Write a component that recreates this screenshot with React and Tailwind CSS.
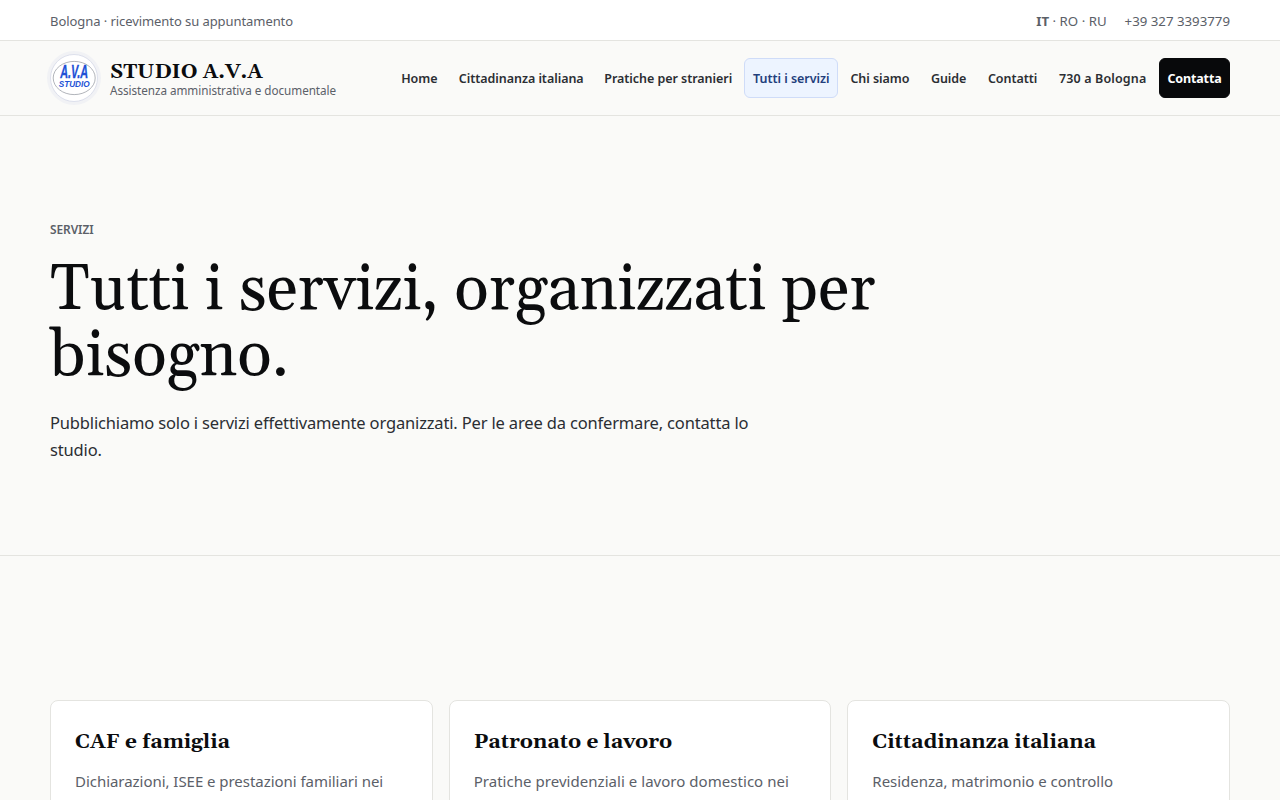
const navItems = [
  { label: 'Home', width: 'w-[55.3px]' },
  { label: 'Cittadinanza italiana', width: 'w-[142px]' },
  { label: 'Pratiche per stranieri', width: 'w-[145.7px]' },
  { label: 'Tutti i servizi', width: 'w-[94px]', active: true },
  { label: 'Chi siamo', width: 'w-[77px]' },
  { label: 'Guide', width: 'w-[54px]' },
  { label: 'Contatti', width: 'w-[67.5px]' },
  { label: '730 a Bologna', width: 'w-[106.3px]', wide: true },
  { label: 'Contatta', width: 'w-[71px]', cta: true },
];

const cards = [
  { title: 'CAF e famiglia', text: 'Dichiarazioni, ISEE e prestazioni familiari nei', tracking: 'tracking-[-0.04px]' },
  { title: 'Patronato e lavoro', text: 'Pratiche previdenziali e lavoro domestico nei', tracking: 'tracking-[0.04px]' },
  { title: 'Cittadinanza italiana', text: 'Residenza, matrimonio e controllo', tracking: 'tracking-[-0.02px]' },
];

function Logo() {
  return (
    <svg viewBox="0 0 54 54" className="-m-[3px] size-[54px] shrink-0">
      <circle cx="27" cy="27" r="27" fill="#f1f2f5" />
      <circle cx="27" cy="27" r="23.5" fill="#fff" stroke="#dde0ec" />
      <ellipse cx="27.2" cy="27" rx="21" ry="16.6" fill="#fff" stroke="#8f949c" strokeWidth="0.7" />
      <g fill="#2151d6" fontFamily="Liberation Sans, Arial, sans-serif" fontWeight="700" fontStyle="italic" textAnchor="middle">
        <text x="27.2" y="27.3" fontSize="17.5" textLength="28" lengthAdjust="spacingAndGlyphs" stroke="#2151d6" strokeWidth="0.3">A.V.A</text>
        <text x="27.2" y="36.2" fontSize="8.6" textLength="31" lengthAdjust="spacingAndGlyphs">STUDIO</text>
      </g>
    </svg>
  );
}

function NavLink({ item }) {
  const look = item.cta
    ? 'border-[#08090b] bg-[#08090b] font-bold text-white tracking-[-0.15px]'
    : item.active
      ? 'border-[#cfdcf8] bg-[#edf4ff] font-semibold text-[#233f7c] tracking-[-0.05px]'
      : 'border-transparent font-semibold text-[#2b2e33]';
  const tracking = item.cta || item.active ? '' : item.wide ? 'tracking-[0.14px]' : 'tracking-[-0.05px]';
  return (
    <a className={`flex h-10 items-center justify-center rounded-md border pt-[2px] text-[12.5px] whitespace-nowrap ${item.width} ${look} ${tracking}`}>
      {item.label}
    </a>
  );
}

export default function App() {
  return (
    <div className="h-[800px] overflow-hidden bg-[#fafaf8] font-['Noto_Sans',sans-serif] text-[#0b0c0e]">
      <div className="flex h-[41px] items-center justify-between border-b border-[#e4e4e0] bg-white px-[50px] pt-[3px] text-[13px] text-[#5b6068]">
        <span className="tracking-[-0.07px]">Bologna · ricevimento su appuntamento</span>
        <div className="flex gap-[18px]">
          <span className="text-[13.25px]"><b>IT</b> · RO · RU</span>
          <span className="text-[13.25px]">+39 327 3393779</span>
        </div>
      </div>

      <header className="flex h-[75px] items-center justify-between border-b border-[#e4e4e0] px-[50px]">
        <div className="flex items-center gap-3">
          <Logo />
          <div className="flex flex-col pt-[2px]">
            <span className="font-[Gelasio,Georgia,serif] text-[20.5px] leading-[22px] font-bold">STUDIO A.V.A</span>
            <span className="text-[11.7px] leading-[15px] tracking-[-0.04px] text-[#5b6068]">Assistenza amministrativa e documentale</span>
          </div>
        </div>
        <nav className="flex gap-[3.2px]">
          {navItems.map((item) => <NavLink key={item.label} item={item} />)}
        </nav>
      </header>

      <section className="h-[440px] border-b border-[#e4e4e0] px-[50px] pt-[103px]">
        <p className="text-[11.9px] leading-5 font-semibold tracking-[-0.05px] text-[#5b6068]">SERVIZI</p>
        <h1 className="mt-[19px] w-[860px] font-[Gelasio,Georgia,serif] text-[64px] leading-[66px]">
          Tutti i servizi, organizzati per bisogno.
        </h1>
        <p className="mt-[19px] w-[720px] text-[16.5px] leading-[27px] tracking-[-0.16px] text-[#2b2e33]">
          Pubblichiamo solo i servizi effettivamente organizzati. Per le aree da confermare, contatta lo studio.
        </p>
      </section>

      <section className="grid grid-cols-3 gap-4 px-[50px] pt-36">
        {cards.map((card) => (
          <article key={card.title} className="h-[180px] rounded-lg border border-[#e4e4e0] bg-white px-6 pt-[25px]">
            <h2 className="font-[Gelasio,Georgia,serif] text-[20.8px] leading-8 font-bold">{card.title}</h2>
            <p className={`mt-[10px] text-[15px] leading-[26px] text-[#5b6068] ${card.tracking}`}>{card.text}</p>
          </article>
        ))}
      </section>
    </div>
  );
}
